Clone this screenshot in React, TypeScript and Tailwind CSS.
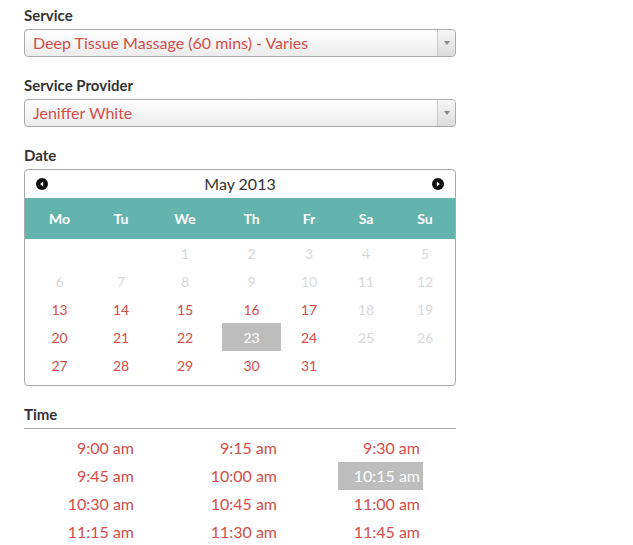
import { useState } from "react";

const font = { fontFamily: "Lato, 'Open Sans', sans-serif" };

const days: (number | null)[] = [
  null, null, 1, 2, 3, 4, 5,
  6, 7, 8, 9, 10, 11, 12,
  13, 14, 15, 16, 17, 18, 19,
  20, 21, 22, 23, 24, 25, 26,
  27, 28, 29, 30, 31, null, null,
];

// days that can be booked
const available = [13, 14, 15, 16, 17, 20, 21, 22, 23, 24, 27, 28, 29, 30, 31];

const weekdays = ["Mo", "Tu", "We", "Th", "Fr", "Sa", "Su"];

const times = [
  "9:00 am", "9:15 am", "9:30 am",
  "9:45 am", "10:00 am", "10:15 am",
  "10:30 am", "10:45 am", "11:00 am",
  "11:15 am", "11:30 am", "11:45 am",
];

const Label = ({ children, className = "" }: { children: string; className?: string }) => (
  <div className={`text-[15px] font-bold leading-[20px] text-[#333] ${className}`}>{children}</div>
);

const Select = ({ value }: { value: string }) => (
  <div className="flex h-[28px] items-stretch rounded-[4px] border border-[#aaa] bg-gradient-to-b from-white to-[#ececec]">
    <div className="flex flex-1 items-center pl-[8px] text-[16px] text-[#d54e49]">{value}</div>
    <div className="flex w-[18px] items-center justify-center border-l border-[#c8c8c8] bg-gradient-to-b from-[#f6f6f6] to-[#dcdcdc] rounded-r-[4px]">
      <svg width="6" height="4" viewBox="0 0 6 4">
        <path d="M0 0h6L3 4z" fill="#888" />
      </svg>
    </div>
  </div>
);

const NavArrow = ({ dir }: { dir: "left" | "right" }) => (
  <svg width="12" height="12" viewBox="0 0 12 12">
    <circle cx="6" cy="6" r="6" fill="#111" />
    {dir === "left" ? (
      <path d="M7.2 3.4v5.2L4 6z" fill="#fff" />
    ) : (
      <path d="M4.8 3.4v5.2L8 6z" fill="#fff" />
    )}
  </svg>
);

const cols = "grid grid-cols-[69px_54px_74px_59px_56px_58px_60px]";

export default function App() {
  const [day, setDay] = useState(23);
  const [time, setTime] = useState("10:15 am");

  return (
    <div className="min-h-[545px] bg-white pl-[24px] pt-[5px]" style={font}>
      <div className="w-[432px]">
        <Label className="mb-[4px]">Service</Label>
        <Select value="Deep Tissue Massage (60 mins) - Varies" />

        <Label className="mt-[18px] mb-[4px]">Service Provider</Label>
        <Select value="Jeniffer White" />

        <Label className="mt-[18px] mb-[4px]">Date</Label>
        <div className="rounded-[4px] border border-[#aaa] pb-[6px]">
          <div className="flex h-[28px] items-center justify-between px-[11px]">
            <NavArrow dir="left" />
            <span className="text-[16px] text-[#333]">May 2013</span>
            <NavArrow dir="right" />
          </div>
          <div className={`${cols} h-[41px] items-center bg-[#64b4ae] text-[14px] font-bold text-white`}>
            {weekdays.map((w) => (
              <div key={w} className="text-center">{w}</div>
            ))}
          </div>
          <div className={cols}>
            {days.map((d, i) => {
              const ok = d !== null && available.includes(d);
              const sel = d === day;
              return (
                <div
                  key={i}
                  onClick={() => ok && d && setDay(d)}
                  className={`flex h-[28px] items-center justify-center text-[14px] ${
                    sel
                      ? "bg-[#bdbdbd] text-white"
                      : ok
                      ? "cursor-pointer text-[#d54e49]"
                      : "text-[#d9d9d9]"
                  }`}
                >
                  {d ?? ""}
                </div>
              );
            })}
          </div>
        </div>

        <Label className="mt-[18px] border-b border-[#aaa] pb-[4px]">Time</Label>
        <div className="mt-[5px] ml-[28px] grid grid-cols-[85px_85px_85px] gap-x-[58px]">
          {times.map((t) => (
            <div
              key={t}
              onClick={() => setTime(t)}
              className={`flex h-[28px] cursor-pointer items-center justify-end pr-[3px] text-[16px] ${
                t === time ? "bg-[#bdbdbd] text-white" : "text-[#d54e49]"
              }`}
            >
              {t}
            </div>
          ))}
        </div>
      </div>
    </div>
  );
}
